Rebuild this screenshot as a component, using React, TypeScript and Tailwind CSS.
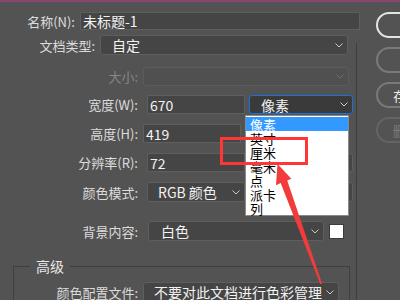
import type { ReactNode } from "react";

const font = { fontFamily: '"Noto Sans CJK SC", "Noto Sans", sans-serif' };

function Chevron({ dim = false }: { dim?: boolean }) {
  return (
    <svg width="8" height="5" viewBox="0 0 8 5" className="shrink-0">
      <polyline
        points="0.5,0.5 4,4 7.5,0.5"
        fill="none"
        stroke={dim ? "#6e6e6e" : "#c8c8c8"}
        strokeWidth="1"
      />
    </svg>
  );
}

function Label({ w, children, dim = false }: { w: string; children: ReactNode; dim?: boolean }) {
  return (
    <div className={`${w} shrink-0 text-right pr-[5px] text-[13px] leading-none ${dim ? "text-[#858585]" : "text-[#dcdcdc]"}`}>
      {children}
    </div>
  );
}

function Input({ w, h = "h-[19px]", value }: { w: string; h?: string; value: string }) {
  return (
    <div className={`${w} ${h} shrink-0 flex items-center bg-[#454545] border border-[#5e5e5e] pl-[2px] text-[14px] text-[#f2f2f2] leading-none`}>
      {value}
    </div>
  );
}

function Select({
  w,
  h = "h-[20px]",
  value,
  pl = "pl-[10px]",
  variant = "normal",
}: {
  w: string;
  h?: string;
  value: string;
  pl?: string;
  variant?: "normal" | "disabled" | "focus";
}) {
  const box =
    variant === "disabled"
      ? "bg-[#505050] border-[#5c5c5c]"
      : variant === "focus"
        ? "bg-[#3a3a3a] border-[#1e6fd9]"
        : "bg-[#454545] border-[#5e5e5e]";
  return (
    <div className={`${w} ${h} ${pl} shrink-0 flex items-center justify-between pr-[4px] rounded-[3px] border ${box} text-[14px] text-[#f2f2f2] leading-none`}>
      <span>{value}</span>
      <Chevron dim={variant === "disabled"} />
    </div>
  );
}

function Button({ text, tone }: { text: string; tone: "default" | "normal" | "disabled" }) {
  const cls =
    tone === "default"
      ? "border-[#e4e4e4] text-[#f0f0f0]"
      : tone === "normal"
        ? "border-[#7a7a7a] text-[#f0f0f0]"
        : "border-[#646464] text-[#7a7a7a]";
  return (
    <div className={`w-[114px] h-[26px] shrink-0 rounded-full border-2 ${cls} flex items-center justify-center text-[13px] leading-none whitespace-nowrap`}>
      {text}
    </div>
  );
}

export default function App() {
  const units = ["像素", "英寸", "厘米", "毫米", "点", "派卡", "列"];

  return (
    <div className="relative w-[400px] h-[300px] overflow-hidden bg-[#535353] border-t-2 border-[#8a4470]" style={font}>
      <div className="flex">
        {/* form */}
        <div className="w-[356px] shrink-0 flex flex-col">
          <div className="flex items-center mt-[10px]">
            <Label w="w-[80px]">名称(N):</Label>
            <Input w="w-[280px]" h="h-[18px]" value="未标题-1" />
          </div>
          <div className="flex items-center mt-[5px]">
            <Label w="w-[100px]">文档类型:</Label>
            <Select w="w-[248px]" value="自定" pl="pl-[11px]" />
          </div>
          <div className="flex items-center mt-[12px]">
            <Label w="w-[143px]" dim>大小:</Label>
            <Select w="w-[206px]" h="h-[19px]" value="" variant="disabled" />
          </div>
          <div className="flex items-center mt-[9px] gap-[4px]">
            <Label w="w-[143px]">宽度(W):</Label>
            <Input w="w-[98px]" value="670" />
            <Select w="w-[104px]" h="h-[19px]" value="像素" pl="pl-[11px]" variant="focus" />
          </div>
          <div className="flex items-center mt-[10px]">
            <Label w="w-[143px]">高度(H):</Label>
            <Input w="w-[98px]" value="419" />
          </div>
          <div className="flex items-center mt-[10px] gap-[4px]">
            <Label w="w-[143px]">分辨率(R):</Label>
            <Input w="w-[98px]" value="72" />
            <Select w="w-[104px]" h="h-[19px]" value="像素/英寸" />
          </div>
          <div className="flex items-center mt-[10px] gap-[4px]">
            <Label w="w-[143px]">颜色模式:</Label>
            <Select w="w-[98px]" value="RGB 颜色" />
            <Select w="w-[104px]" value="8 位" />
          </div>
          <div className="flex items-center mt-[19px] gap-[5px]">
            <Label w="w-[143px]">背景内容:</Label>
            <Select w="w-[176px]" value="白色" pl="pl-[12px]" />
            <div className="w-[15px] h-[15px] bg-white border border-[#3c3c3c]" />
          </div>

          <fieldset className="ml-[13px] mr-[6px] mt-[17px] border border-[#3f3f3f] pb-[10px]">
            <legend className="ml-[16px] px-[6px] text-[14px] leading-[16px] text-[#e8e8e8]">高级</legend>
            <div className="flex items-center mt-[8px]">
              <Label w="w-[129px]">颜色配置文件:</Label>
              <Select w="w-[196px]" value="不要对此文档进行色彩管理" />
            </div>
          </fieldset>
        </div>

        {/* divider */}
        <div className="w-px mt-[41px] h-[260px] bg-[#3e3e3e] shrink-0" />

        {/* buttons */}
        <div className="ml-[19px] mt-[10px] flex flex-col gap-[9px]">
          <Button text="确定" tone="default" />
          <Button text="取消" tone="normal" />
          <Button text="存储预设(S)..." tone="normal" />
          <Button text="删除预设(D)..." tone="disabled" />
        </div>
      </div>

      {/* open unit list */}
      <div className="absolute left-[245px] top-[113px] w-[104px] h-[101px] bg-white border border-[#8a8a8a] pt-[1px]">
        {units.map((u, i) => (
          <div
            key={u}
            className={`h-[14px] pl-[4px] flex items-center text-[13px] leading-none ${i === 0 ? "bg-[#3399ff] text-white" : "text-black"}`}
          >
            {u}
          </div>
        ))}
      </div>

      {/* annotation */}
      <div className="absolute left-[220px] top-[135px] w-[88px] h-[28px] border-[3px] border-[#ff3636]" />
      <svg className="absolute left-0 top-0" width="400" height="300" viewBox="0 0 400 302">
        <polygon
          points="278,163 292,178 287.8,179.8 323,284 321,284 281.2,182.3 276.5,184.5"
          fill="#f23b3b"
        />
      </svg>
    </div>
  );
}
